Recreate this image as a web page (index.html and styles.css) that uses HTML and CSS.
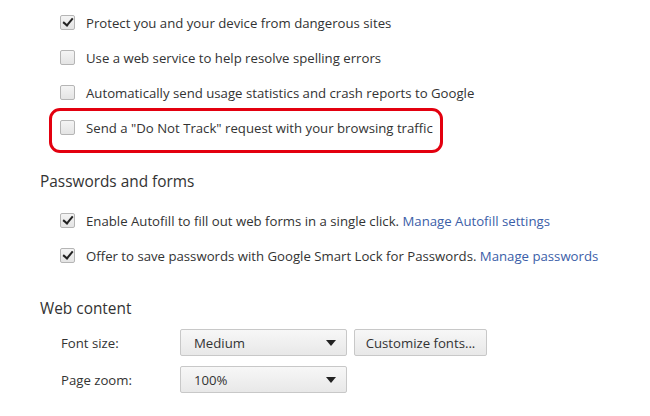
FILE: index.html
```html
<!DOCTYPE html>
<html>
<head>
<meta charset="utf-8">
<link rel="stylesheet" href="styles.css">
</head>
<body>
<div class="page">
  <div class="group first">
    <div class="row"><span class="cb checked"></span><span class="label">Protect you and your device from dangerous sites</span></div>
    <div class="row"><span class="cb"></span><span class="label">Use a web service to help resolve spelling errors</span></div>
    <div class="row"><span class="cb"></span><span class="label">Automatically send usage statistics and crash reports to Google</span></div>
    <div class="row highlight"><span class="cb"></span><span class="label">Send a "Do Not Track" request with your browsing traffic</span></div>
  </div>

  <h2 class="section-title">Passwords and forms</h2>
  <div class="group">
    <div class="row"><span class="cb checked"></span><span class="label">Enable Autofill to fill out web forms in a single click. <a class="link">Manage Autofill settings</a></span></div>
    <div class="row"><span class="cb checked"></span><span class="label">Offer to save passwords with Google Smart Lock for Passwords. <a class="link">Manage passwords</a></span></div>
  </div>

  <h2 class="section-title web">Web content</h2>
  <div class="settings">
    <div class="setting">
      <span class="setting-label">Font size:</span>
      <div class="select"><span>Medium</span><span class="arrow"></span></div>
      <div class="button">Customize fonts...</div>
    </div>
    <div class="setting">
      <span class="setting-label">Page zoom:</span>
      <div class="select"><span>100%</span><span class="arrow"></span></div>
    </div>
  </div>
</div>
</body>
</html>
```

FILE: styles.css
```css
html, body {
  margin: 0;
  padding: 0;
  background: #ffffff;
}
body {
  font-family: "Open Sans", "Noto Sans", sans-serif;
  font-size: 13.2px;
  color: #333333;
  width: 650px;
  height: 416px;
  overflow: hidden;
}
.page {
  padding: 5px 0 0 40px;
}
.group {
  display: flex;
  flex-direction: column;
  padding-left: 20px;
}
.row {
  display: flex;
  align-items: center;
  height: 35px;
  gap: 11px;
}
.highlight {
  position: relative;
}
.highlight::after {
  content: "";
  position: absolute;
  left: -11px;
  top: -2px;
  width: 388px;
  height: 39px;
  border: 3px solid #e3000f;
  border-radius: 11px;
}
.cb {
  width: 13px;
  height: 13px;
  border: 1px solid #b5b5b5;
  border-radius: 2px;
  background: linear-gradient(#f4f4f4, #e4e4e4);
  position: relative;
  flex: none;
}
.cb.checked::after {
  content: "";
  position: absolute;
  left: 4px;
  top: 0px;
  width: 4px;
  height: 8px;
  border-right: 2.5px solid #222;
  border-bottom: 2.5px solid #222;
  transform: rotate(40deg);
}
.label {
  white-space: nowrap;
}
.link {
  color: #3b5ea8;
}
.section-title {
  font-size: 15.4px;
  font-weight: normal;
  color: #333;
  margin: 26px 0 10px 0;
  height: 22px;
  line-height: 22px;
}
.section-title.web {
  margin-top: 25px;
  margin-bottom: 9px;
}
.settings {
  display: flex;
  flex-direction: column;
  gap: 10px;
  padding-left: 21px;
}
.setting {
  display: flex;
  align-items: center;
}
.setting-label {
  width: 119px;
}
.select {
  box-sizing: border-box;
  width: 167px;
  height: 27px;
  border: 1px solid #c8c8c8;
  border-radius: 2px;
  background: linear-gradient(#f7f7f7, #e8e8e8);
  display: flex;
  align-items: center;
  justify-content: space-between;
  padding: 0 10px 0 13px;
}
.arrow {
  width: 0;
  height: 0;
  border-left: 5px solid transparent;
  border-right: 5px solid transparent;
  border-top: 6px solid #222;
}
.button {
  box-sizing: border-box;
  margin-left: 7px;
  height: 27px;
  width: 133px;
  border: 1px solid #c8c8c8;
  border-radius: 2px;
  background: linear-gradient(#f7f7f7, #e8e8e8);
  display: flex;
  align-items: center;
  justify-content: center;
}
```
